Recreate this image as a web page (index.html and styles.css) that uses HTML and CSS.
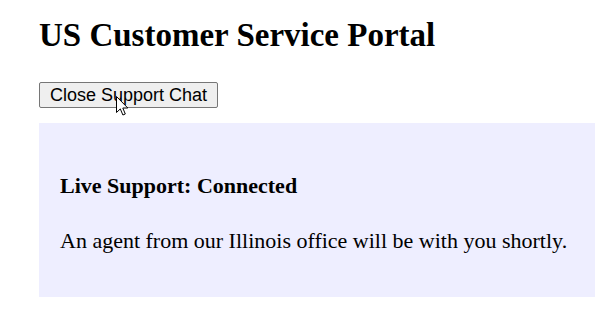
FILE: index.html
```html
<!DOCTYPE html>
<html>
<head>
<meta charset="utf-8">
<link rel="stylesheet" href="styles.css">
</head>
<body>
<h1 class="title">US Customer Service Portal</h1>
<button class="close-btn">Close Support Chat</button>
<div class="panel">
  <h3 class="status">Live Support: Connected</h3>
  <p class="msg">An agent from our Illinois office will be with you shortly.</p>
</div>
<svg class="cursor" width="13" height="21" viewBox="0 0 13 21">
  <path d="M0.5 0.5 L0.5 16.5 L4.3 12.9 L6.9 19 L9.3 18 L6.8 12 L11.8 12 Z" fill="#fff" stroke="#000" stroke-width="1" stroke-linejoin="round"/>
</svg>
</body>
</html>
```
FILE: styles.css
```css
html, body {
  margin: 0;
  padding: 0;
  background: #fff;
}
body {
  padding: 16px 0 0 39px;
  font-family: "Liberation Serif", "Times New Roman", serif;
  color: #000;
  position: relative;
  overflow: hidden;
  height: 328px;
  box-sizing: border-box;
}
.title {
  font-size: 33px;
  font-weight: bold;
  margin: 0 0 28px;
  line-height: 38px;
}
.close-btn {
  display: block;
  font-family: "Liberation Sans", Arial, sans-serif;
  font-size: 18px;
  height: 26px;
  width: 179px;
  padding: 0;
  background: #efefef;
  border: 1px solid #767676;
  border-radius: 2px;
  color: #000;
  margin: 0 0 15px;
}
.panel {
  background: #eeeeff;
  padding: 50px 21px 44px;
}
.status {
  font-size: 22px;
  font-weight: bold;
  margin: 0 0 30px;
  line-height: 25px;
}
.msg {
  font-size: 22px;
  margin: 0;
  line-height: 25px;
}
.cursor {
  position: absolute;
  left: 116px;
  top: 96px;
}
```
